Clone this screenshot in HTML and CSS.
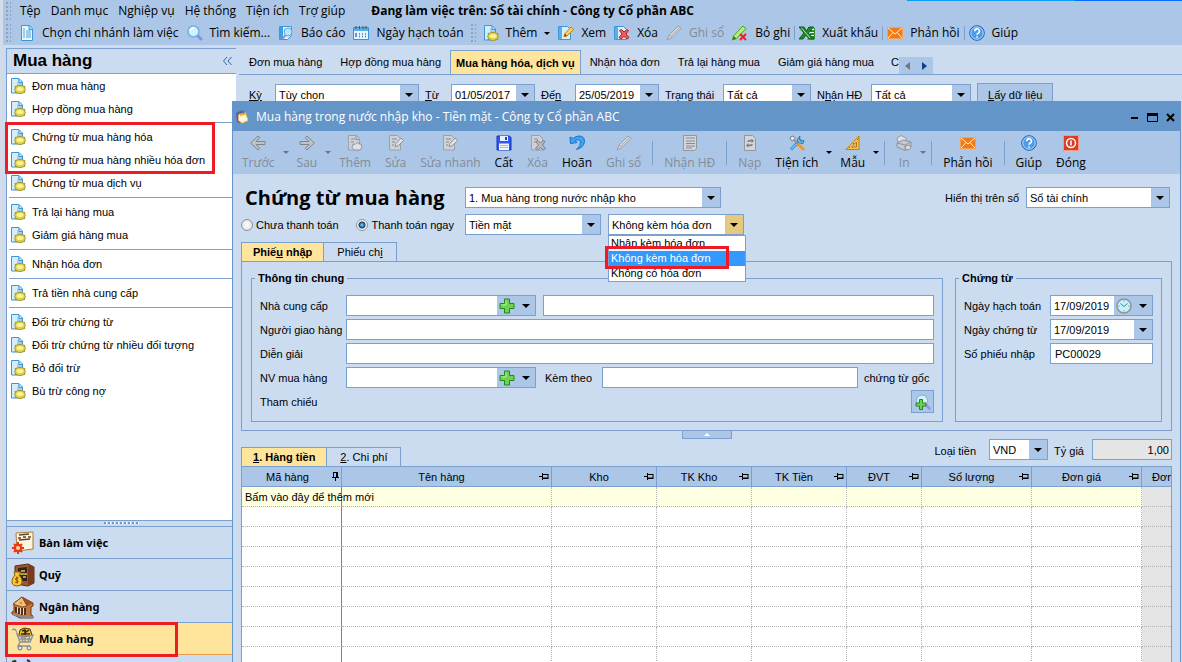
FILE: index.html
```html
<!DOCTYPE html>
<html lang="vi">
<head>
  <meta charset="UTF-8">
  <meta name="viewport" content="width=device-width, initial-scale=1.0">
  <title>Chứng từ mua hàng</title>
  <link rel="stylesheet" href="styles.css">
</head>
<body>
  <!-- icon sprite -->
  <svg class="sprite" aria-hidden="true">
    <symbol id="i-doc" viewBox="0 0 16 16"><path d="M2.5.5h8l3 3v12h-11z" fill="#e9f5fd" stroke="#3b98d8"/><path d="M10 .5v4h3.500" fill="#a9d7f5" stroke="#3b98d8"/><path d="M4 4h2M4 6h2M4 8h2M4 10h2M4 12h2M7 6h5M7 8h5M7 10h5M7 12h5" stroke="#4da4de"/></symbol>
    <symbol id="i-page" viewBox="0 0 16 16"><path d="M1.500.5h7.500l3.500 3.500v11h-11z" fill="#d5ecfb" stroke="#3b98d8"/><path d="M9 1v3.500h3V12H7V4z" fill="#a3d2f3"/><path d="M9 1v3.500h3" fill="none" stroke="#3b98d8"/><path d="M5 8.500l2.500-.5 1-1 1.500.8 1.500-.8 1 1 2.500.5-.5 1.500 1 1.500-1 1.500.3 1.500-2.300.3-1 .9H8.500l-1-.9-2.500-.3.500-1.500-1-1.500 1-1.500z" fill="#d9cf4c" stroke="#a89520"/><ellipse cx="10" cy="11" rx="3.500" ry="2" fill="#f9f395"/></symbol>
    <symbol id="i-pagegray" viewBox="0 0 16 16"><path d="M1.500.5h8l3 3v11.500h-11z" fill="#ccd0d6" stroke="#9a9fa8"/><path d="M9 1v3.500h3M4 4h4M4 7h3" fill="none" stroke="#8b9098"/><path d="M6 9l2 .5 2-2 2 1.500 2 0 1 3-2 3h-6l-2-2.500z" fill="#dfe1e4" stroke="#9297a0"/></symbol>
    <symbol id="i-search" viewBox="0 0 16 16"><path d="M10 10l4 4" stroke="#8f8be0" stroke-width="3" stroke-linecap="round"/><circle cx="6.500" cy="6.500" r="5.500" fill="#d5effb" stroke="#6cb4e4" stroke-width="1.500"/><path d="M3 6a4 4 0 0 1 4-3" stroke="#fff" stroke-width="2" fill="none"/></symbol>
    <symbol id="i-report" viewBox="0 0 16 16"><path d="M1.500 1.500h12v9l-4 4h-8z" fill="#e2f3fd" stroke="#3b98d8"/><path d="M2 2h3v12H2z" fill="#3f9fe0"/><path d="M8 10l-4 4" stroke="#8f8be0" stroke-width="2"/><circle cx="10" cy="7" r="4" fill="#bfe3f8" stroke="#5aa9dd"/></symbol>
    <symbol id="i-cal" viewBox="0 0 16 16"><path d="M.5 2.500h15v12H.5z" fill="#e7f4fd" stroke="#3a93d6"/><path d="M1 3h14v3H1z" fill="#5aaee6"/><path d="M3 1v3M6.500 1v3M10 1v3M13 1v3" stroke="#47525f"/><path d="M3 8v4M6 9h1M9 9h1M12 9h1M6 11.500h1M9 11.500h1M12 11.500h1" stroke="#2c7fc4" stroke-width="1.500"/></symbol>
    <symbol id="i-edit" viewBox="0 0 16 16"><path d="M.5 1.500h9l3 3v10h-12z" fill="#d9eefb" stroke="#3b98d8"/><path d="M1 2h3v12H1z" fill="#5cb0e6"/><path d="M6 11.500l1-3 6-6.500 2.500 2.500-6.500 6.500z" fill="#ffcf5a" stroke="#b98320"/><path d="M6 11.500l1-3 2 2.500z" fill="#6b4a20"/></symbol>
    <symbol id="i-editgray" viewBox="0 0 16 16"><path d="M1.500.5h8l3 3v11.500h-11z" fill="#ced1d6" stroke="#9a9fa8"/><path d="M4 4h5M4 7h3M4 10h2" stroke="#858a92"/><path d="M7 11.500l1-3 5-5.500 2.500 2.500-5.500 5.500z" fill="#e3e4e6" stroke="#8a8f97"/></symbol>
    <symbol id="i-del" viewBox="0 0 16 16"><path d="M.5 1.500h9l3 3v10h-12z" fill="#d9eefb" stroke="#3b98d8"/><path d="M1 2h3v12H1z" fill="#5cb0e6"/><path d="M5.500 5.500l2-1 2.500 2.500 2.500-2.500 2 1-2.500 3.500 3 3.500-2 1.500-3-2.500-3 2.500-2-1.500 3-3.500z" fill="#ec5a5a" stroke="#b52525"/></symbol>
    <symbol id="i-delgray" viewBox="0 0 16 16"><path d="M1.500.5h8l3 3v11.500h-11z" fill="#ced1d6" stroke="#9a9fa8"/><path d="M4 4h4M4 7h2" stroke="#858a92"/><path d="M6 6.500l2-1 2.500 2.500 2.500-2.500 2 1-2.500 3.500 3 3.500-2 1.500-3-2.500-3 2.500-2-1.500 3-3.500z" fill="#b7bbc1" stroke="#777c85"/></symbol>
    <symbol id="i-pengray" viewBox="0 0 16 16"><path d="M1 15l2-5 9-9 3 2.500-9 9z" fill="#d4d6d9" stroke="#999ea6"/><path d="M3 10l3 2.500M5 11l8-8" stroke="#a9adb4"/></symbol>
    <symbol id="i-penx" viewBox="0 0 16 16"><path d="M.5 15l1-4 9.500-10 3 2.500-9.500 10z" fill="#b5f07b" stroke="#43a512"/><path d="M.5 15l1-4 3 2.500z" fill="#43701e"/><path d="M8 9l6 6M14 9l-6 6" stroke="#ee2222" stroke-width="2"/></symbol>
    <symbol id="i-excel" viewBox="0 0 16 16"><path d="M9 3h6.500v11H8" fill="#fff" stroke="#2d8a35"/><path d="M11 6h4M11 9h4M11 12h4" stroke="#2d8a35" stroke-width="2"/><path d="M0 2h5l2.500 4L10 2h4.500L9.500 8l5.500 6h-5l-3-4-3 4H0l5-6z" fill="#238a2c" stroke="#0d5c18"/><path d="M2.500 3l8.500 10" stroke="#a4e2a1"/></symbol>
    <symbol id="i-mail" viewBox="0 0 16 16"><path d="M.5 2.500h15v11H.5z" fill="#f27a12" stroke="#f8a04e"/><path d="M1 3l7 6 7-6M1 13l5-5.500M15 13l-5-5.500" fill="none" stroke="#fff3e4"/></symbol>
    <symbol id="i-help" viewBox="0 0 16 16"><circle cx="8" cy="8" r="7.300" fill="#4b9bea" stroke="#235fae"/><circle cx="8" cy="8" r="6.200" fill="none" stroke="#b5dbfa"/><path d="M5.800 6.200a2.300 2.300 0 1 1 3.300 2q-1.100.6-1.100 1.600M8 11.300v1.500" fill="none" stroke="#fff" stroke-width="1.600"/></symbol>
    <symbol id="i-left" viewBox="0 0 16 16"><path d="M.7 8L8 1l1.700 1.700-3.700 3.800h9v3H6l3.700 3.800L8 15z" fill="#bfc3c8" stroke="#80858c"/></symbol>
    <symbol id="i-right" viewBox="0 0 16 16"><path d="M15.300 8L8 1 6.300 2.700 10 6.500H1v3h9l-3.700 3.800L8 15z" fill="#bfc3c8" stroke="#80858c"/></symbol>
    <symbol id="i-save" viewBox="0 0 16 16"><path d="M1 1h12.500L15 2.500V15H1z" fill="#2f56f0" stroke="#1534bd"/><path d="M4 1h8v5H4z" fill="#e8eeff"/><path d="M9 2h2v3H9z" fill="#1c3fd4"/><path d="M3 8.500h10V15H3z" fill="#f4f7ff"/><path d="M4 10.500h8M4 12.500h8" stroke="#9fb4f3"/></symbol>
    <symbol id="i-undo" viewBox="0 0 16 16"><path d="M1 2l.5 6.500 6.500-1-2-2q4.500-2 5.500 1.500.5 3.500-4 7.500 7.500-2 8-8 0-5.500-5.500-5.500-3.500 0-6 2.500z" fill="#3ea4f2" stroke="#1672c8"/></symbol>
    <symbol id="i-form" viewBox="0 0 16 16"><path d="M1.500.5h13v13l-2 2h-11z" fill="#d3d5d9" stroke="#92979f"/><path d="M4 3h9M4 6h9M4 8.500h9M4 11h9M4 13h6" stroke="#878c94"/></symbol>
    <symbol id="i-reload" viewBox="0 0 16 16"><path d="M2.500.5h8l3 3v12h-11z" fill="#d3d5d9" stroke="#92979f"/><path d="M5 7q1-3 4.500-2V3.500L12 6 9.500 8V6.500Q7 6 7 7zM11 9q-1 3-4.500 2v1.500L4 10.500 6.500 8v1.500q2.500.5 2.500-.5z" fill="#777c84"/></symbol>
    <symbol id="i-tools" viewBox="0 0 16 16"><path d="M2 14.500L12 4" stroke="#318fd8" stroke-width="3"/><path d="M2.500 14L11 5" stroke="#b4e0fa"/><path d="M11 1l-1 3 2 2.500 3-1-1 3-4-.5-2-3z" fill="#7cc5f3" stroke="#2379bb"/><path d="M9 9l5 5" stroke="#ef9a22" stroke-width="3" stroke-linecap="round"/><path d="M4 4l5 5" stroke="#82878f" stroke-width="1.500"/><path d="M1 4q0-3 3-3l2.500 2-3 3z" fill="#e4e6e9" stroke="#777c84"/></symbol>
    <symbol id="i-ruler" viewBox="0 0 16 16"><path d="M1 14.500L14 1v13.500z" fill="#f9c44c" stroke="#c07d15"/><path d="M6.500 12l5-5v5z" fill="#abc6e6" stroke="#b87712"/><path d="M4 12l1 1M8 8l1 1M12 4l1 1" stroke="#8f5d10"/></symbol>
    <symbol id="i-print" viewBox="0 0 16 16"><path d="M1 3l4-2.500 5 2.500v4H2z" fill="#e1e2e5" stroke="#969ba3"/><path d="M1 8l6-3 8 2v5l-6 3.500L1 12z" fill="#c5c8cd" stroke="#8d929a"/><path d="M1 8l8 2 6-3M9 10v5" fill="none" stroke="#91969e"/><circle cx="12" cy="12.500" r="2.500" fill="#d9dbde" stroke="#8d929a"/></symbol>
    <symbol id="i-power" viewBox="0 0 16 16"><path d="M.5.5h15v15H.5z" fill="#dd3c22" stroke="#f19b83"/><circle cx="8" cy="8" r="4.500" fill="none" stroke="#fff" stroke-width="1.500"/><path d="M8 5.500v5" stroke="#fff" stroke-width="1.500"/></symbol>
    <symbol id="i-plus" viewBox="0 0 16 16"><path d="M5.500 1h5v4.500H15v5h-4.500V15h-5v-4.500H1v-5h4.500z" fill="#6fd150" stroke="#1f8a1c"/><path d="M7 2.500v4.500H2.500" stroke="#b5f09a" fill="none"/></symbol>
    <symbol id="i-clock" viewBox="0 0 16 16"><circle cx="8" cy="8" r="7" fill="#c3f3fa" stroke="#8d949b" stroke-width="1.500"/><path d="M4.500 5.500L8 8.500l3.500-3" fill="none" stroke="#3f8791"/><path d="M8 2.500v1M8 12.500v1M2.500 8h1M12.500 8h1" stroke="#e24a4a"/></symbol>
    <symbol id="i-findadd" viewBox="0 0 16 16"><path d="M11.500 11.500l3 3" stroke="#9a90e4" stroke-width="2.500" stroke-linecap="round"/><circle cx="7" cy="6.500" r="5.500" fill="#d9f0fb" stroke="#6cb4e4"/><path d="M4.500 5.500h3v3.500H11v3H7.500v3.500h-3V12H1V9h3.500z" fill="#6fd150" stroke="#1f8a1c"/></symbol>
    <symbol id="i-note" viewBox="0 0 16 16"><path d="M1 3l8-2 1 2 4 8-9 4-3-2z" fill="#5a5bd0"/><path d="M4 5l8-2 3 9-7 3-4-3z" fill="#fff6d6" stroke="#e3b84b"/><path d="M5 5l7-2 .5 2-7 2z" fill="#f4b231"/><path d="M4 1v4M7 0v4M10 1v3" stroke="#565b6d"/></symbol>
    <symbol id="i-pin" viewBox="0 0 10 9"><path d="M0 4.500h3.500M3.500 1v7M4 2.500h5M9 2v5M4 6h5" stroke="#000" fill="none"/><path d="M4 6h5v1H4z"/></symbol>
    <symbol id="i-pindown" viewBox="0 0 8 9"><path d="M4.500 5.500V9M1 5.500h7M2.500 0v5M6.500 0v5M2 .5h5" stroke="#000" fill="none"/><path d="M5 0h1v5H5z"/></symbol>
    <symbol id="i-desk" viewBox="0 0 24 24"><path d="M5 2l17-1v17l-16 2z" fill="#fff5dc" stroke="#a87b43"/><path d="M18 20l5-2V3l-1 14z" fill="#d39a58"/><path d="M8 4l10-1M7 7h3M12 6h3M17 6h3M8 9l11-1" stroke="#5d432c" stroke-width="1.500"/><path d="M7 11v12M1 17h12M3 13l8 8M11 13l-8 8" stroke="#ee3511" stroke-width="2"/><circle cx="7" cy="17" r="3.500" fill="none" stroke="#ee3511" stroke-width="1.500"/><circle cx="7" cy="17" r="2" fill="#ffd9a5"/></symbol>
    <symbol id="i-safe" viewBox="0 0 24 24"><path d="M4 3l13-2 6 3v16l-6 3-13-2z" fill="#a4552f" stroke="#5b2b14"/><path d="M17 2l6 2v16l-6 2z" fill="#7a3b1d"/><path d="M7 5l9-1v14H7z" fill="#33221a"/><path d="M8 11h8M10 8h4M12 14h3" stroke="#b3a03c" stroke-width="2"/><path d="M4 12l-1-3h7l-2 3q4 4 3 8-1 3-5 3t-5-3q-1-4 3-8z" fill="#f8cb34" stroke="#8c6110"/><path d="M7.500 15Q4 14 4.500 16.500q3 .5 2.500 2.500-2 1-3 0M6 13.500v7" fill="none" stroke="#8a4c08"/></symbol>
    <symbol id="i-bank" viewBox="0 0 24 24"><path d="M2 9L11 2l11 6v3l-2 1v8l2 1v2H9l-8-4v-2l2-1v-6z" fill="#c27741" stroke="#6e3a18"/><path d="M2 9L11 2l5 9-5 1z" fill="#f0c285" stroke="#8b5022"/><path d="M11 2l11 6-6 3z" fill="#9e4f26"/><circle cx="10" cy="8" r="1.500" fill="#d19b28"/><path d="M5 12v6M8 13v6M11 13v7M14 13v7" stroke="#51301d" stroke-width="2"/><path d="M6.500 12v6M9.500 13v6M12.500 13v7" stroke="#f6dab0"/><path d="M2 19l9 3h12" stroke="#8d8a85" fill="none" stroke-width="2"/></symbol>
    <symbol id="i-cart" viewBox="0 0 24 24"><path d="M9 3l4-2 6 1 2 6-9 2-4-2z" fill="#f5bd24" stroke="#493009"/><path d="M11 4l3-1 1 2 3-2M10 7h9M14 4v5" stroke="#30220b" stroke-width="1.500" fill="none"/><path d="M1 3q3-2 4 1l4 11h10l3-7L7 9M9 12h12M10 9l2 6M14 9v6M19 8l-2 7M9 15l-2 4h12" fill="none" stroke="#8d939b" stroke-width="1.500"/><path d="M1 5q3-3 4 1" fill="none" stroke="#e8ebef"/><circle cx="9" cy="21" r="2" fill="#dee1e5" stroke="#70767f"/><circle cx="18" cy="21" r="2" fill="#dee1e5" stroke="#70767f"/></symbol>
  </svg>

  <header class="topbar">
    <nav class="menubar">
      <span class="grip"></span>
      <button>Tệp</button>
      <button>Danh mục</button>
      <button>Nghiệp vụ</button>
      <button>Hệ thống</button>
      <button>Tiện ích</button>
      <button>Trợ giúp</button>
      <strong class="status">Đang làm việc trên: Sổ tài chính - Công ty Cổ phần ABC</strong>
    </nav>
    <div class="toolbar">
      <span class="grip"></span>
      <button><svg class="ico"><use href="#i-doc"/></svg>Chọn chi nhánh làm việc</button>
      <button><svg class="ico"><use href="#i-search"/></svg>Tìm kiếm...</button>
      <button><svg class="ico"><use href="#i-report"/></svg>Báo cáo</button>
      <button><svg class="ico"><use href="#i-cal"/></svg>Ngày hạch toán</button>
      <span class="grip"></span>
      <button><svg class="ico"><use href="#i-page"/></svg>Thêm<i class="caret"></i></button>
      <button><svg class="ico"><use href="#i-edit"/></svg>Xem</button>
      <button><svg class="ico"><use href="#i-del"/></svg>Xóa</button>
      <button disabled><svg class="ico"><use href="#i-pengray"/></svg>Ghi sổ</button>
      <button><svg class="ico"><use href="#i-penx"/></svg>Bỏ ghi</button>
      <span class="sep"></span>
      <button><svg class="ico"><use href="#i-excel"/></svg>Xuất khẩu</button>
      <span class="sep"></span>
      <button><svg class="ico"><use href="#i-mail"/></svg>Phản hồi</button>
      <span class="sep"></span>
      <button><svg class="ico"><use href="#i-help"/></svg>Giúp</button>
    </div>
  </header>

  <div class="workspace">
    <aside class="sidebar">
      <div class="sidebar-head"><h2>Mua hàng</h2><button aria-label="Thu gọn"><svg width="9" height="8"><path d="M4 0L.5 4 4 8M8.500 0L5 4l3.500 4" fill="none" stroke="#3a64a8"/></svg></button></div>
      <div class="sidebar-list">
        <ul>
          <li><a href="#"><svg class="ico"><use href="#i-page"/></svg>Đơn mua hàng</a></li>
          <li><a href="#"><svg class="ico"><use href="#i-page"/></svg>Hợp đồng mua hàng</a></li>
        </ul>
        <ul class="marked">
          <li><a href="#"><svg class="ico"><use href="#i-page"/></svg>Chứng từ mua hàng hóa</a></li>
          <li><a href="#"><svg class="ico"><use href="#i-page"/></svg>Chứng từ mua hàng nhiều hóa đơn</a></li>
          <li><a href="#"><svg class="ico"><use href="#i-page"/></svg>Chứng từ mua dịch vụ</a></li>
        </ul>
        <ul>
          <li><a href="#"><svg class="ico"><use href="#i-page"/></svg>Trả lại hàng mua</a></li>
          <li><a href="#"><svg class="ico"><use href="#i-page"/></svg>Giảm giá hàng mua</a></li>
        </ul>
        <ul>
          <li><a href="#"><svg class="ico"><use href="#i-page"/></svg>Nhận hóa đơn</a></li>
        </ul>
        <ul>
          <li><a href="#"><svg class="ico"><use href="#i-page"/></svg>Trả tiền nhà cung cấp</a></li>
        </ul>
        <ul>
          <li><a href="#"><svg class="ico"><use href="#i-page"/></svg>Đối trừ chứng từ</a></li>
          <li><a href="#"><svg class="ico"><use href="#i-page"/></svg>Đối trừ chứng từ nhiều đối tượng</a></li>
          <li><a href="#"><svg class="ico"><use href="#i-page"/></svg>Bỏ đối trừ</a></li>
          <li><a href="#"><svg class="ico"><use href="#i-page"/></svg>Bù trừ công nợ</a></li>
        </ul>
      </div>
      <div class="splitter"></div>
      <nav class="modules">
        <a href="#"><svg><use href="#i-desk"/></svg>Bàn làm việc</a>
        <a href="#"><svg><use href="#i-safe"/></svg>Quỹ</a>
        <a href="#"><svg><use href="#i-bank"/></svg>Ngân hàng</a>
        <a href="#" class="active"><svg><use href="#i-cart"/></svg>Mua hàng</a>
        <a href="#" class="cut" aria-label="Bán hàng"><svg><path d="M1 7l3-1 1 1M16 5l2 1 1 1" fill="none" stroke="#333" stroke-width="2"/></svg></a>
      </nav>
    </aside>

    <main class="content">
      <div class="page-tabs">
        <button>Đơn mua hàng</button>
        <button>Hợp đồng mua hàng</button>
        <button class="active">Mua hàng hóa, dịch vụ</button>
        <button>Nhận hóa đơn</button>
        <button>Trả lại hàng mua</button>
        <button>Giảm giá hàng mua</button>
        <button class="clipped">C</button>
        <span class="scroller"><button aria-label="Trước"></button><button aria-label="Sau"></button></span>
      </div>
      <div class="filters">
        <label for="f-period"><u>Kỳ</u></label>
        <span class="combo"><select id="f-period"><option>Tùy chọn</option></select></span>
        <label for="f-from"><u>T</u>ừ</label>
        <span class="combo"><input id="f-from" type="text" value="01/05/2017"></span>
        <label for="f-to">Đế<u>n</u></label>
        <span class="combo"><input id="f-to" type="text" value="25/05/2019"></span>
        <label for="f-state">Trạn<u>g</u> thái</label>
        <span class="combo"><select id="f-state"><option>Tất cả</option></select></span>
        <label for="f-inv">N<u>h</u>ận HĐ</label>
        <span class="combo"><select id="f-inv"><option>Tất cả</option></select></span>
        <button class="load"><u>L</u>ấy dữ liệu</button>
      </div>
    </main>
  </div>

  <section class="dialog" role="dialog" aria-labelledby="dialog-title">
    <div class="titlebar">
      <svg class="ico"><use href="#i-note"/></svg>
      <span id="dialog-title">Mua hàng trong nước nhập kho - Tiền mặt - Công ty Cổ phần ABC</span>
      <button aria-label="Thu nhỏ"><svg width="11" height="11"><path d="M2 5h7v2H2z"/></svg></button>
      <button aria-label="Phóng to"><svg width="11" height="11"><path d="M.5 1.500h10v8H.5z" fill="none" stroke="#000"/><path d="M0 1h11v3H0z"/></svg></button>
      <button aria-label="Đóng"><svg width="11" height="11"><path d="M2 2l7 7M9 2L2 9" stroke="#000" stroke-width="2"/></svg></button>
    </div>

    <div class="actions">
      <button disabled><svg class="ico"><use href="#i-left"/></svg>Trước</button>
      <i class="caret"></i>
      <button disabled><svg class="ico"><use href="#i-right"/></svg>Sau</button>
      <i class="caret"></i>
      <button disabled><svg class="ico"><use href="#i-pagegray"/></svg>Thêm</button>
      <button disabled><svg class="ico"><use href="#i-editgray"/></svg>Sửa</button>
      <button disabled><svg class="ico"><use href="#i-editgray"/></svg>Sửa nhanh</button>
      <button><svg class="ico"><use href="#i-save"/></svg>Cất</button>
      <button disabled><svg class="ico"><use href="#i-delgray"/></svg>Xóa</button>
      <button><svg class="ico"><use href="#i-undo"/></svg>Hoãn</button>
      <button disabled><svg class="ico"><use href="#i-pengray"/></svg>Ghi sổ</button>
      <span class="sep"></span>
      <button disabled><svg class="ico"><use href="#i-form"/></svg>Nhận HĐ</button>
      <span class="sep"></span>
      <button disabled><svg class="ico"><use href="#i-reload"/></svg>Nạp</button>
      <button><svg class="ico"><use href="#i-tools"/></svg>Tiện ích</button>
      <i class="caret dark"></i>
      <button><svg class="ico"><use href="#i-ruler"/></svg>Mẫu</button>
      <i class="caret dark"></i>
      <span class="sep"></span>
      <button disabled><svg class="ico"><use href="#i-print"/></svg>In</button>
      <i class="caret"></i>
      <span class="sep"></span>
      <button><svg class="ico"><use href="#i-mail"/></svg>Phản hồi</button>
      <span class="sep"></span>
      <button><svg class="ico"><use href="#i-help"/></svg>Giúp</button>
      <button><svg class="ico"><use href="#i-power"/></svg>Đóng</button>
    </div>

    <div class="dialog-body">
      <div class="heading">
        <h1>Chứng từ mua hàng</h1>
        <span class="combo w-kind"><select aria-label="Loại chứng từ"><option>1. Mua hàng trong nước nhập kho</option></select></span>
        <label class="push" for="book">Hiển thị trên sổ</label>
        <span class="combo w-book"><select id="book"><option>Sổ tài chính</option></select></span>
      </div>

      <div class="payment">
        <div class="radios">
          <label><input type="radio" name="pay">Chưa thanh toán</label>
          <label><input type="radio" name="pay" checked>Thanh toán ngay</label>
        </div>
        <span class="combo w-pay"><select aria-label="Hình thức thanh toán"><option>Tiền mặt</option></select></span>
        <div class="invoice">
          <span class="combo open"><select aria-label="Hóa đơn"><option>Không kèm hóa đơn</option></select></span>
          <ul class="options" role="listbox">
            <li role="option">Nhận kèm hóa đơn</li>
            <li role="option" aria-selected="true">Không kèm hóa đơn</li>
            <li role="option">Không có hóa đơn</li>
          </ul>
        </div>
      </div>

      <div class="tabs">
        <button class="active">Phiế<u>u</u> nhập</button>
        <button>Phiếu ch<u>i</u></button>
      </div>
      <div class="panel">
        <fieldset class="general">
          <legend>Thông tin chung</legend>
          <div class="field">
            <label for="supplier">Nhà cung cấp</label>
            <span class="combo w-code"><input id="supplier" type="text"><button aria-label="Thêm nhà cung cấp"><svg class="ico"><use href="#i-plus"/></svg></button></span>
            <input type="text" aria-label="Tên nhà cung cấp">
          </div>
          <div class="field">
            <label for="deliver">Người giao hàng</label>
            <input id="deliver" type="text">
          </div>
          <div class="field">
            <label for="note">Diễn giải</label>
            <input id="note" type="text">
          </div>
          <div class="field">
            <label for="staff">NV mua hàng</label>
            <span class="combo w-code"><input id="staff" type="text"><button aria-label="Thêm nhân viên"><svg class="ico"><use href="#i-plus"/></svg></button></span>
            <label class="attach" for="attach">Kèm theo</label>
            <input id="attach" type="text">
            <span class="suffix">chứng từ gốc</span>
          </div>
          <div class="field">
            <span class="name">Tham chiếu</span>
            <button class="find" aria-label="Chọn tham chiếu"><svg class="ico"><use href="#i-findadd"/></svg></button>
          </div>
        </fieldset>
        <fieldset class="voucher">
          <legend>Chứng từ</legend>
          <div class="field">
            <label for="d1">Ngày hạch toán</label>
            <span class="combo"><input id="d1" type="text" value="17/09/2019"><button aria-label="Giờ"><svg class="ico"><use href="#i-clock"/></svg></button></span>
          </div>
          <div class="field">
            <label for="d2">Ngày chứng từ</label>
            <span class="combo"><input id="d2" type="text" value="17/09/2019"></span>
          </div>
          <div class="field">
            <label for="no">Số phiếu nhập</label>
            <input id="no" type="text" value="PC00029">
          </div>
        </fieldset>
      </div>
      <button class="collapse" aria-label="Thu gọn"></button>

      <div class="detail-bar">
        <div class="tabs">
          <button class="active"><u>1</u>. Hàng tiền</button>
          <button><u>2</u>. Chi phí</button>
        </div>
        <label class="push" for="currency">Loại tiền</label>
        <span class="combo w-cur"><select id="currency"><option>VND</option></select></span>
        <label for="rate">Tỷ giá</label>
        <input id="rate" type="text" value="1,00" readonly>
      </div>

      <div class="grid">
        <table>
          <colgroup>
            <col class="c100"><col><col class="c105"><col class="c95"><col class="c95"><col class="c75"><col class="c110"><col class="c110"><col class="c29">
          </colgroup>
          <thead>
            <tr>
              <th><div><span>Mã hàng</span><svg width="8" height="9"><use href="#i-pindown"/></svg></div></th>
              <th><div><span>Tên hàng</span><svg width="10" height="9"><use href="#i-pin"/></svg></div></th>
              <th><div><span>Kho</span><svg width="10" height="9"><use href="#i-pin"/></svg></div></th>
              <th><div><span>TK Kho</span><svg width="10" height="9"><use href="#i-pin"/></svg></div></th>
              <th><div><span>TK Tiền</span><svg width="10" height="9"><use href="#i-pin"/></svg></div></th>
              <th><div><span>ĐVT</span><svg width="10" height="9"><use href="#i-pin"/></svg></div></th>
              <th><div><span>Số lượng</span><svg width="10" height="9"><use href="#i-pin"/></svg></div></th>
              <th><div><span>Đơn giá</span><svg width="10" height="9"><use href="#i-pin"/></svg></div></th>
              <th class="last">Đơn</th>
            </tr>
          </thead>
          <tbody>
            <tr class="new"><td>Bấm vào đây để thêm mới</td><td></td><td></td><td></td><td></td><td></td><td></td><td></td><td></td></tr>
            <tr><td></td><td></td><td></td><td></td><td></td><td></td><td></td><td></td><td></td></tr>
            <tr><td></td><td></td><td></td><td></td><td></td><td></td><td></td><td></td><td></td></tr>
            <tr><td></td><td></td><td></td><td></td><td></td><td></td><td></td><td></td><td></td></tr>
            <tr><td></td><td></td><td></td><td></td><td></td><td></td><td></td><td></td><td></td></tr>
            <tr><td></td><td></td><td></td><td></td><td></td><td></td><td></td><td></td><td></td></tr>
            <tr><td></td><td></td><td></td><td></td><td></td><td></td><td></td><td></td><td></td></tr>
            <tr><td></td><td></td><td></td><td></td><td></td><td></td><td></td><td></td><td></td></tr>
            <tr><td></td><td></td><td></td><td></td><td></td><td></td><td></td><td></td><td></td></tr>
          </tbody>
        </table>
      </div>
    </div>
  </section>
</body>
</html>
```
FILE: styles.css
```css
*, *::before, *::after {
  box-sizing: border-box;
}

body {
  margin: 0;
  height: 100vh;
  overflow: hidden;
  display: flex;
  flex-direction: column;
  position: relative;
  padding-left: 3px;
  background: linear-gradient(to right, #d3dae8 3px, #cbdbf0 3px);
  color: #000;
  font: 11px/14px "Liberation Sans", Arial, sans-serif;
}

button, input, select {
  font: inherit;
  color: inherit;
  margin: 0;
  padding: 0;
  border: 0;
  border-radius: 0;
  background: none;
  outline: 0;
}

a {
  color: inherit;
  text-decoration: none;
}

ul {
  margin: 0;
  padding: 0;
  list-style: none;
}

.sprite {
  position: absolute;
  width: 0;
  height: 0;
}

.ico {
  width: 16px;
  height: 16px;
  flex: none;
}

.caret {
  flex: none;
  border: 3px solid transparent;
  border-top-color: #000;
  border-bottom: 0;
}

.grip {
  flex: none;
  width: 5px;
  height: 18px;
  background: radial-gradient(circle at 1px 1px, #8fa3bd 1px, transparent 1px) 0 0 / 4px 4px;
}

.sep {
  flex: none;
  width: 1px;
  height: 14px;
  background: #7ba0cd;
}

/* top menu and toolbar */
.topbar {
  flex: none;
  height: 45px;
  background: #abc6e6;
  font: 12px/16px "Open Sans", sans-serif;
}

.topbar::after {
  content: "";
  position: absolute;
  top: 0;
  right: 0;
  width: 275px;
  height: 1px;
  background: linear-gradient(to right, #0a9cf5 168px, #0a6cff 168px);
}

.menubar, .toolbar {
  display: flex;
  align-items: center;
  height: 22px;
  padding-left: 3px;
}

.menubar button {
  padding: 0 5px;
}

.menubar .grip {
  margin-right: 4px;
}

.status {
  margin-left: 21px;
}

.toolbar button {
  display: flex;
  align-items: center;
  gap: 7px;
  padding: 0 4px;
}

.toolbar .grip {
  margin: 0 3px;
}

.toolbar .grip:first-child {
  margin: 0 4px 0 0;
}

button:disabled {
  color: #848c97;
}

/* workspace */
.workspace {
  flex: 1;
  min-height: 0;
  display: flex;
  gap: 3px;
  padding: 3px 0 0 3px;
}

.sidebar {
  flex: none;
  width: 230px;
  display: flex;
  flex-direction: column;
  border: 1px solid #7ba0cd;
  border-width: 1px 0 0 1px;
}

.sidebar-head {
  display: flex;
  align-items: center;
  justify-content: space-between;
  height: 25px;
  padding: 0 4px 0 6px;
  border-bottom: 1px solid #7ba0cd;
}

.sidebar-head h2 {
  margin: 0;
  font-size: 17px;
  line-height: 24px;
}

.sidebar-head button {
  display: flex;
}

.sidebar-list {
  flex: 1;
  min-height: 0;
  background: #fff;
}

.sidebar-list ul:first-child {
  height: 45px;
}

.sidebar-list ul + ul {
  position: relative;
  margin: 3px 0 0 2px;
  padding-top: 2px;
  border-top: 1px solid #7ba0cd;
}

.sidebar-list a {
  display: flex;
  align-items: center;
  gap: 6px;
  height: 23px;
  padding-left: 3px;
}

.sidebar-list ul + ul a {
  padding-left: 1px;
}

.marked::before {
  content: "";
  position: absolute;
  top: -1px;
  left: -4px;
  width: 210px;
  height: 52px;
  border: 3px solid #ed1c24;
}

.splitter {
  height: 6px;
  display: flex;
  border-top: 1px solid #7ba0cd;
  justify-content: center;
}

.splitter::after {
  content: "";
  width: 36px;
  height: 2px;
  margin: 1px 0;
  background: repeating-linear-gradient(to right, #6f97c8 0 2px, #fff 2px 3px, transparent 3px 4px);
}

.modules a {
  position: relative;
  display: flex;
  align-items: center;
  gap: 4px;
  height: 32px;
  padding-left: 4px;
  border-top: 1px solid #7ba0cd;
  font: bold 11px/16px "Noto Sans", sans-serif;
}

.modules svg {
  width: 24px;
  height: 24px;
}

.modules .active {
  background: #ffe49c;
}

.modules .active::before {
  content: "";
  position: absolute;
  top: -1px;
  left: -2px;
  width: 173px;
  height: 35px;
  border: 3px solid #ed1c24;
  z-index: 1;
}

.modules .cut {
  height: 8px;
  overflow: hidden;
  align-items: flex-start;
  border-top-color: #ef9c4a;
}

.content {
  flex: 1;
  min-width: 0;
}

.page-tabs {
  display: flex;
  align-items: flex-end;
  height: 27px;
  padding-left: 1px;
  border-bottom: 1px solid #7ba0cd;
}

.page-tabs button {
  height: 24px;
  padding: 0 9px;
  white-space: nowrap;
}

.page-tabs .active {
  padding: 0 5px;
  border: 1px solid #7ba0cd;
  border-bottom: 0;
  background: #ffe49c;
  font-weight: bold;
}

.page-tabs .clipped {
  width: 16px;
  padding: 0 0 0 8px;
  overflow: hidden;
}

.scroller {
  display: flex;
  justify-content: space-around;
  align-items: center;
  width: 34px;
  height: 17px;
  background: #abc6e6;
}

.page-tabs .scroller button {
  width: 0;
  height: 0;
  padding: 0;
  border: 4px solid transparent;
  border-left: 0;
  border-right: 5px solid #74787e;
}

.page-tabs .scroller button:last-child {
  border-right: 0;
  border-left: 5px solid #143c8c;
}

.filters {
  display: grid;
  grid-template-columns: 20px 144px 20px 84px 28px 84px 52px 88px 48px 100px auto;
  justify-content: start;
  align-items: center;
  gap: 6px;
  padding: 8px 10px;
  white-space: nowrap;
}

/* combo box: white field on a blue button area with an arrow */
.combo {
  display: flex;
  align-items: center;
  height: 21px;
  border: 1px solid #7ba0cd;
  background: #abc6e6;
}

.combo::after {
  content: "";
  flex: none;
  margin: 0 5px;
  border: 4px solid transparent;
  border-top-color: #000;
  border-bottom: 0;
}

.combo select,
.combo input {
  flex: 1;
  min-width: 0;
  width: 100%;
  height: 19px;
  padding: 0 3px;
  background: #fff;
  appearance: none;
}

.combo button {
  display: flex;
  padding: 0 2px;
}

.w-kind { width: 256px; }
.w-book { width: 144px; }
.w-pay { width: 136px; }
.w-code { width: 190px; }
.w-cur { width: 59px; }

.load {
  height: 23px;
  padding: 0 10px;
  border: 1px solid #7ba0cd;
  background: #abc6e6;
}

/* dialog window */
.dialog {
  position: absolute;
  top: 101px;
  left: 232px;
  right: 1px;
  bottom: 0;
  display: flex;
  flex-direction: column;
  border: 1px solid #6495c8;
  border-width: 0 1px;
  background: #cbdbf0;
}

.titlebar {
  display: flex;
  align-items: center;
  gap: 7px;
  height: 30px;
  padding: 2px 4px 0 2px;
  background: #6495c8;
  color: #fff;
  font: 12px/16px "Open Sans", sans-serif;
}

.titlebar .ico {
  width: 14px;
}

.titlebar span {
  flex: 1;
}

.titlebar button {
  display: flex;
}

.actions {
  display: flex;
  align-items: center;
  height: 43px;
  padding: 0 2px;
  background: #abc6e6;
  font: 12px/16px "Open Sans", sans-serif;
}

.actions button {
  display: flex;
  flex-direction: column;
  align-items: center;
  gap: 4px;
  padding: 0 7px;
  white-space: nowrap;
}

.actions .caret {
  margin: 0 1px;
  border-top-color: #6e747c;
}

.actions .dark {
  border-top-color: #000;
}

.actions .sep {
  height: 24px;
  margin: 0 4px;
}

.dialog-body {
  flex: 1;
  min-height: 0;
  display: flex;
  flex-direction: column;
  padding: 13px 8px 0;
}

.push {
  margin-left: auto;
}

.heading, .payment {
  display: flex;
  align-items: center;
  gap: 7px;
  height: 21px;
  padding-right: 2px;
}

.heading h1 {
  width: 217px;
  margin: 0;
  padding-left: 4px;
  font: bold 20px/24px "Open Sans", sans-serif;
  white-space: nowrap;
}

.payment {
  margin-top: 6px;
}

.radios {
  display: flex;
  justify-content: space-between;
  width: 217px;
  padding-right: 4px;
}

.radios label {
  display: flex;
  align-items: center;
  gap: 3px;
}

.radios input {
  appearance: none;
  width: 12px;
  height: 12px;
  border: 1px solid #8b929b;
  border-radius: 50%;
  background: radial-gradient(#fff, #d5d9de);
}

.radios input:checked {
  background: radial-gradient(#59b8e8 1px, #16385c 3px, #f4f6f8 4px);
}

.invoice {
  position: relative;
  width: 136px;
}

.open {
  background: #e3ca80;
}

.options {
  position: absolute;
  top: 21px;
  left: 0;
  width: 138px;
  border: 1px solid #7ba0cd;
  background: #fff;
  z-index: 1;
}

.options li {
  height: 15px;
  padding-left: 2px;
  line-height: 15px;
}

.options [aria-selected] {
  background: #3399ff;
  color: #fff;
}

.options::after {
  content: "";
  position: absolute;
  top: 10px;
  left: -4px;
  width: 124px;
  height: 23px;
  border: 3px solid #ed1c24;
}

.tabs {
  display: flex;
}

.tabs button {
  height: 19px;
  padding: 0 13px;
  border: 1px solid #7ba0cd;
  border-bottom: 0;
}

.tabs button + button {
  border-left: 0;
}

.tabs .active {
  padding: 0 11px;
  background: #ffe49c;
  font-weight: bold;
}

.payment + .tabs {
  margin-top: 7px;
}

.panel {
  display: flex;
  gap: 12px;
  padding: 9px 9px 8px;
  border: 1px solid #7ba0cd;
}

fieldset {
  margin: 0;
  padding: 10px 8px 6px;
  border: 1px solid #7ba0cd;
  min-width: 0;
}

legend {
  margin-left: -5px;
  padding: 0 3px;
  font-weight: bold;
}

.general {
  flex: 1;
}

.voucher {
  width: 207px;
}

.field {
  display: flex;
  align-items: center;
  height: 21px;
  margin-bottom: 3px;
}

.field > label:first-child,
.name {
  flex: none;
  width: 86px;
  white-space: nowrap;
}

.field > input {
  flex: 1;
  min-width: 0;
  height: 21px;
  padding: 0 4px;
  border: 1px solid #7ba0cd;
  background: #fff;
}

.field .combo + input {
  margin-left: 7px;
}

.voucher .combo {
  flex: 1;
  min-width: 0;
}

.attach {
  width: 66px;
  padding-left: 9px;
}

.suffix {
  width: 76px;
  padding-left: 6px;
}

.find {
  display: flex;
  align-items: center;
  justify-content: center;
  width: 23px;
  height: 23px;
  margin-left: auto;
  border: 1px solid #7ba0cd;
  background: #abc6e6;
}

.collapse {
  align-self: center;
  display: flex;
  justify-content: center;
  align-items: center;
  width: 50px;
  height: 8px;
  border: 1px solid #7ba0cd;
  border-top: 0;
  background: #abc6e6;
}

.collapse::after {
  content: "";
  border: 3px solid transparent;
  border-top: 0;
  border-bottom-color: #fff;
}

.detail-bar {
  display: flex;
  align-items: flex-start;
  height: 27px;
}

.detail-bar label {
  padding: 5px 8px 0 0;
}

.detail-bar .push {
  padding-right: 13px;
}

.detail-bar .tabs {
  align-self: flex-end;
}

.w-cur {
  margin-right: 6px;
}

.detail-bar > input {
  width: 80px;
  height: 21px;
  padding: 0 2px;
  border: 1px solid #7ba0cd;
  background: #e5e5e5;
  text-align: right;
}

/* detail table */
.grid {
  flex: 1;
  min-height: 0;
  overflow: hidden;
  border: 1px solid #7ba0cd;
  border-bottom: 0;
  background: #fff;
}

.grid table {
  width: 100%;
  table-layout: fixed;
  border-collapse: separate;
  border-spacing: 0;
}

.grid th {
  height: 20px;
  padding: 0 2px;
  border: 1px solid #7ba0cd;
  border-width: 0 1px 1px 0;
  background: #abc6e6;
  font-weight: normal;
}

.grid th div {
  display: flex;
  align-items: center;
}

.grid th span {
  flex: 1;
}

.grid .last {
  padding: 0 0 0 10px;
  overflow: hidden;
  border-right: 0;
  text-align: left;
}

.grid td {
  height: 20px;
  padding: 0 3px;
  border: 1px dotted #b4b4b4;
  border-width: 0 1px 1px 0;
  white-space: nowrap;
}

.grid td:first-child {
  border-right: 1px solid #808080;
}

.grid td:last-child {
  border-right: 0;
  background: #e5e5e5;
}

.new {
  background: #ffffe1;
}

.c100 { width: 100px; }
.c105 { width: 105px; }
.c95 { width: 95px; }
.c75 { width: 75px; }
.c110 { width: 110px; }
.c29 { width: 29px; }
```
